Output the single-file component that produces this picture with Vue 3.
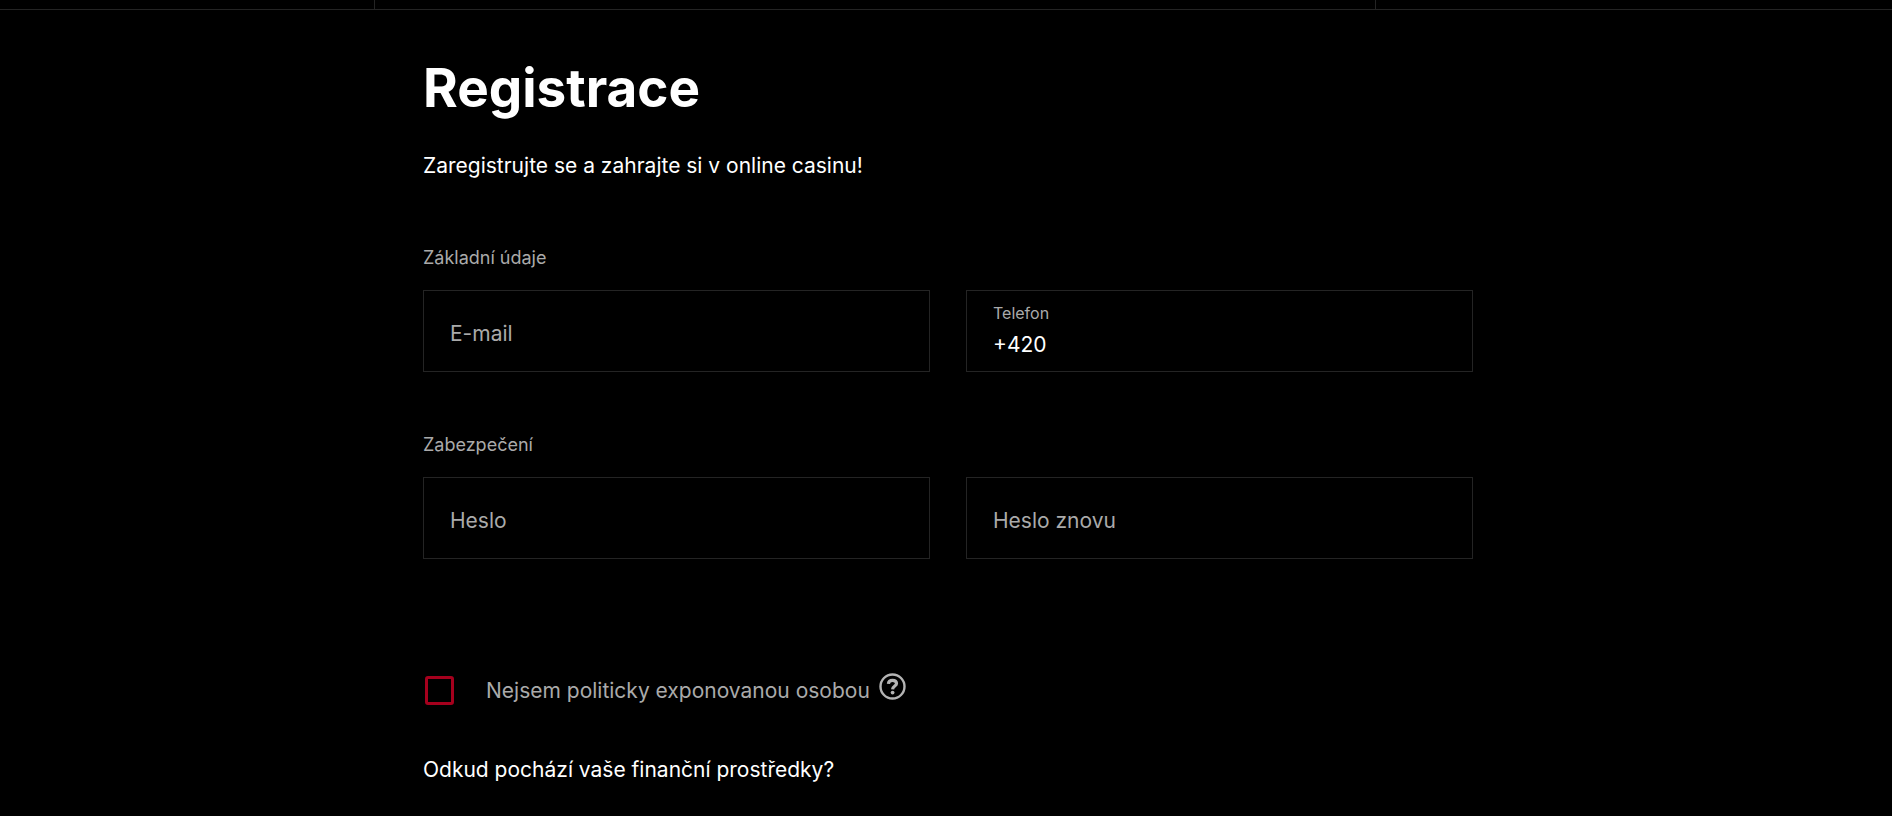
<script setup>
import { ref } from 'vue'

const groups = ref([
  {
    title: 'Základní údaje',
    fields: [
      { id: 'email', label: 'E-mail', type: 'email', value: '' },
      { id: 'phone', label: 'Telefon', type: 'tel', value: '+420' },
    ],
  },
  {
    title: 'Zabezpečení',
    fields: [
      { id: 'password', label: 'Heslo', type: 'password', value: '' },
      { id: 'password-again', label: 'Heslo znovu', type: 'password', value: '' },
    ],
  },
])
const notExposed = ref(false)
</script>

<template>
  <div class="page">
    <header class="topbar">
      <div class="cell"></div>
      <div class="cell"></div>
      <div class="cell"></div>
    </header>
    <main class="content">
      <h1>Registrace</h1>
      <p class="lead">Zaregistrujte se a zahrajte si v online casinu!</p>
      <form @submit.prevent>
        <fieldset v-for="group in groups" :key="group.title">
          <legend>{{ group.title }}</legend>
          <div class="fields">
            <div
              v-for="field in group.fields"
              :key="field.id"
              class="field"
              :class="{ filled: field.value }"
            >
              <label :for="field.id">{{ field.label }}</label>
              <input :id="field.id" v-model="field.value" :type="field.type" />
            </div>
          </div>
        </fieldset>
        <div class="consent">
          <input id="exposed" v-model="notExposed" type="checkbox" />
          <label for="exposed">Nejsem politicky exponovanou osobou</label>
          <button type="button" class="help" aria-label="Nápověda">
            <svg viewBox="0 0 27 27" width="27" height="27" fill="none" stroke="currentColor">
              <circle cx="13.5" cy="13.5" r="12" stroke-width="2.4" />
              <path d="M9.4 10.8C9.6 8.4 11.2 7.3 13.5 7.3C16 7.3 17.5 8.5 17.5 10.5C17.5 13.1 13.8 13 13.6 16.4" stroke-width="3.2" />
              <circle cx="13.6" cy="19.6" r="1.9" fill="currentColor" stroke="none" />
            </svg>
          </button>
        </div>
        <h2>Odkud pochází vaše finanční prostředky?</h2>
      </form>
    </main>
  </div>
</template>

<style>
body {
  background: #000;
}
</style>

<style scoped>
.page {
  min-height: 100vh;
  background: #000;
  color: #fff;
  font-family: Inter, "Liberation Sans", sans-serif;
  font-size: 21px;
  line-height: 32px;
}
.topbar {
  display: grid;
  grid-template-columns: 375px 1fr 516px;
  height: 9px;
  border-bottom: 1px solid #242424;
}
.cell:not(:last-child) {
  border-right: 1px solid #242424;
}
.content {
  max-width: 1050px;
  margin: 0 auto;
  padding: 46px 0 0 4px;
}
h1 {
  margin: 0;
  font-size: 53px;
  line-height: 64px;
  font-weight: 700;
}
.lead {
  margin: 30px 0 60px;
}
fieldset {
  min-width: 0;
  margin: 0 0 57px;
  padding: 0;
  border: 0;
}
legend {
  padding: 0;
  color: #aaa;
  font-size: 18px;
  line-height: 32px;
}
.fields {
  display: grid;
  grid-template-columns: 1fr 1fr;
  gap: 36px;
  padding-top: 16px;
}
.field {
  position: relative;
  border: 1px solid #242424;
}
.field label {
  position: absolute;
  left: 26px;
  top: 27px;
  color: #aaa;
}
.field.filled label {
  top: 6px;
  font-size: 16px;
}
.field input {
  display: block;
  box-sizing: border-box;
  width: 100%;
  height: 80px;
  padding: 26px 26px 0;
  border: 0;
  background: transparent;
  color: #fff;
  font: inherit;
}
.consent {
  display: flex;
  align-items: center;
  margin-top: 114px;
}
.consent input {
  appearance: none;
  box-sizing: border-box;
  width: 29px;
  height: 29px;
  margin: 0 32px 0 2px;
  border: 3px solid #a5001d;
  border-radius: 3px;
}
.consent label {
  color: #aaa;
}
.help {
  margin: 0 0 8px 9px;
  padding: 0;
  border: 0;
  background: none;
  color: #b4b4b4;
}
.help svg {
  display: block;
}
h2 {
  margin: 46px 0 0;
  font-size: 21px;
  line-height: 32px;
  font-weight: 400;
}
</style>
